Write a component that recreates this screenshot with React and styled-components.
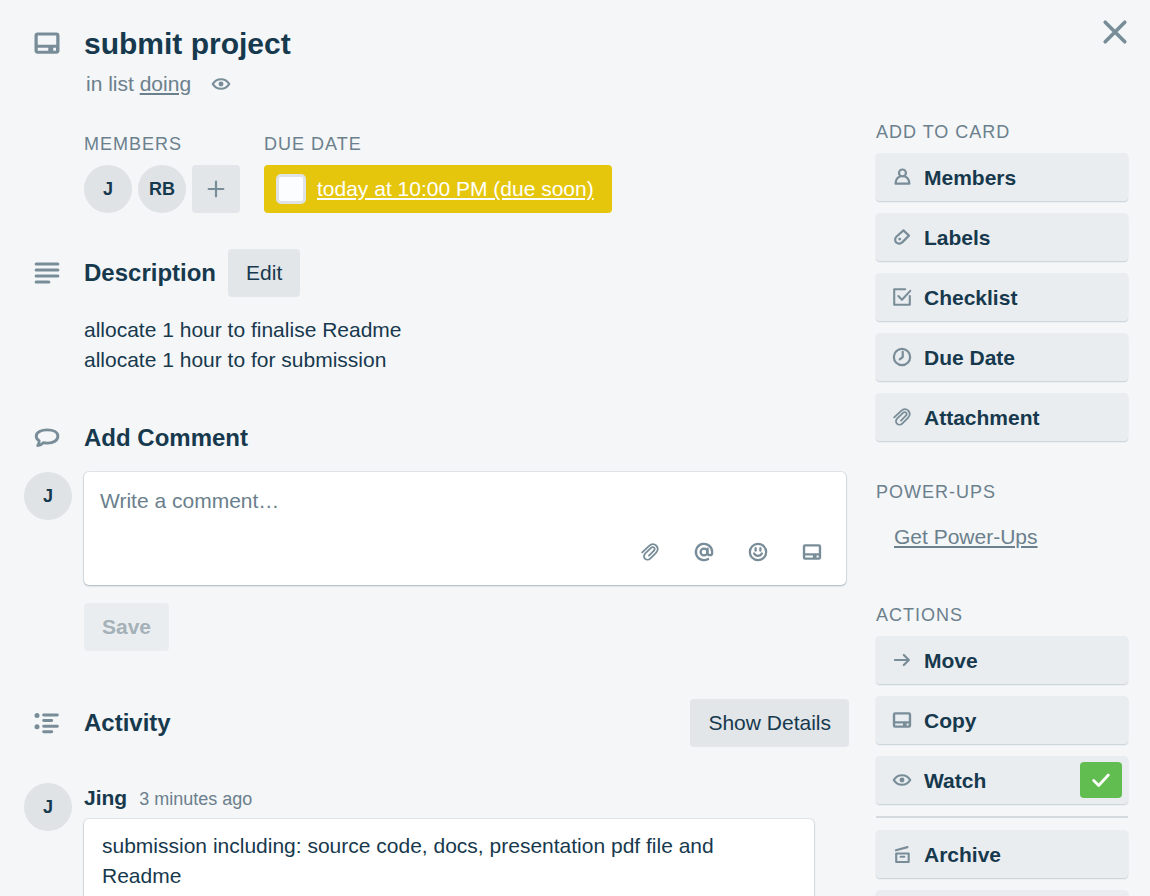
import React from "react";
import styled, { createGlobalStyle, css } from "styled-components";

const GlobalStyle = createGlobalStyle`
  *, *::before, *::after { box-sizing: border-box; }
  body {
    margin: 0;
    background: #f4f6f8;
    color: #17394d;
    font: 21px/30px "Liberation Sans", Arial, sans-serif;
  }
  h1, h2, h3, p { margin: 0; }
  button, input, textarea { font: inherit; color: inherit; margin: 0; }
`;

const Dialog = styled.main`
  height: 100vh;
  overflow: hidden;
  padding: 14px 22px 0 24px;
`;

const Header = styled.header`
  display: flex;
  align-items: flex-start;
  padding-left: 8px;
`;

const Heading = styled.div`
  flex: 1;
  padding-left: 22px;
`;

const Title = styled.h1`
  font-size: 30px;
  line-height: 60px;
  height: 55px;
`;

const ListLine = styled.p`
  display: flex;
  align-items: center;
  gap: 19px;
  padding-left: 2px;
  color: #6b808c;

  svg { color: #798d99; }
`;

const QuietLink = styled.a`
  color: #6b808c;
`;

const IconButton = styled.button`
  display: flex;
  padding: 0;
  border: 0;
  background: none;
  color: #798d99;
  cursor: pointer;
`;

const HeaderIcon = styled.span`
  display: flex;
  padding-top: 14px;
  color: #798d99;
`;

const CloseButton = styled(IconButton)`
  padding-top: 5px;
`;

const Columns = styled.div`
  display: grid;
  grid-template-columns: minmax(0, 1fr) 252px;
  gap: 27px;
  align-items: start;
  padding-top: 21px;
`;

const MainColumn = styled.div`
  padding-top: 12px;
`;

const Sidebar = styled.aside`
  display: flex;
  flex-direction: column;
`;

const Label = styled.h3`
  font-size: 18px;
  font-weight: 400;
  line-height: 24px;
  letter-spacing: 1px;
  text-transform: uppercase;
  color: #6b808c;
`;

const Details = styled.div`
  display: flex;
  gap: 24px;
  padding-left: 60px;
`;

const DetailRow = styled.div`
  display: flex;
  gap: 6px;
  margin-top: 9px;
`;

const Avatar = styled.span`
  display: flex;
  flex: none;
  align-items: center;
  justify-content: center;
  width: 48px;
  height: 48px;
  border-radius: 50%;
  background: #dfe3e6;
  font-size: 18px;
  font-weight: 700;
`;

const Button = styled.button`
  height: 48px;
  padding: 0 18px;
  border: 0;
  border-radius: 4px;
  background: #e2e6e9;
  color: #17394d;
  cursor: pointer;

  &:disabled {
    background: #eaedf0;
    color: #a5b1b8;
    font-weight: 700;
    cursor: default;
  }
`;

const AddButton = styled(Button)`
  display: flex;
  align-items: center;
  justify-content: center;
  width: 48px;
  padding: 0;
  color: #798d99;
`;

const DueBadge = styled.div`
  display: flex;
  align-items: center;
  gap: 11px;
  height: 48px;
  margin-top: 9px;
  padding: 0 18px 0 12px;
  border-radius: 4px;
  background: #e6c60d;
`;

const DueCheckbox = styled.input`
  appearance: none;
  width: 30px;
  height: 30px;
  border: 3px solid #dfe3e6;
  border-radius: 5px;
  background: #fcfdfe;
`;

const DueLink = styled.a`
  color: #fff;
`;

const SectionHead = styled.div`
  display: flex;
  align-items: center;
  height: 48px;
  padding-left: 8px;
  color: #798d99;
`;

const SectionTitle = styled.h2`
  padding-left: 22px;
  padding-right: 12px;
  font-size: 24px;
  line-height: 30px;
  color: #17394d;
  ${(p) => p.$grow && css`flex: 1;`}
`;

const DescriptionSection = styled.section`
  margin-top: 36px;
`;

const DescriptionText = styled.p`
  padding: 18px 0 0 60px;
`;

const CommentSection = styled.section`
  margin-top: 39px;
`;

const ActivitySection = styled.section`
  margin-top: 48px;
`;

const Entry = styled.div`
  display: flex;
  gap: 12px;
  margin-top: ${(p) => p.$space}px;
`;

const EntryBody = styled.div`
  flex: 1;
  min-width: 0;
`;

const Surface = styled.div`
  border-radius: 5px;
  background: #fff;
  box-shadow: 0 1px 2px rgba(9, 45, 66, 0.25), 0 0 0 1px rgba(9, 45, 66, 0.08);
`;

const CommentBox = styled(Surface)`
  height: 113px;
  margin-right: 3px;
  padding: 14px 23px 0 16px;
`;

const CommentInput = styled.textarea`
  display: block;
  width: 100%;
  height: 30px;
  padding: 0;
  border: 0;
  outline: 0;
  resize: none;
  overflow: hidden;
  background: none;

  &::placeholder {
    color: #6b808c;
    opacity: 1;
  }
`;

const CommentTools = styled.div`
  display: flex;
  justify-content: flex-end;
  gap: 32px;
  margin-top: 25px;
`;

const SaveButton = styled(Button)`
  margin-top: 18px;
`;

const Byline = styled.p`
  display: flex;
  align-items: baseline;
  gap: 12px;
`;

const Time = styled.span`
  font-size: 18px;
  color: #6b808c;
`;

const CommentCard = styled(Surface)`
  margin: 5px 35px 0 0;
  padding: 12px 18px;
`;

const SideList = styled.div`
  display: flex;
  flex-direction: column;
  gap: 12px;
  margin-top: 9px;
`;

const SideButton = styled.button`
  display: flex;
  align-items: center;
  gap: 11px;
  height: 48px;
  padding: 0 6px 0 15px;
  border: 0;
  border-radius: 4px;
  background: #eaedf0;
  box-shadow: 0 1px 0 1px rgba(9, 45, 66, 0.03), 0 1px 0 0 rgba(9, 45, 66, 0.12);
  font-weight: 700;
  text-align: left;
  cursor: pointer;

  svg { color: #798d99; }
`;

const SideText = styled.span`
  padding-top: 2px;
`;

const WatchBadge = styled.span`
  display: flex;
  align-items: center;
  justify-content: center;
  width: 42px;
  height: 36px;
  margin-left: auto;
  border-radius: 4px;
  background: #61bd4f;

  svg { color: #fff; }
`;

const Divider = styled.hr`
  width: 100%;
  height: 2px;
  margin: 0;
  border: 0;
  background: #d5dade;
`;

const SideGroup = styled.section`
  display: flex;
  flex-direction: column;
  margin-top: ${(p) => p.$space || 0}px;
`;

const PowerUpLink = styled(QuietLink)`
  align-self: flex-start;
  margin: 18px 0 0 18px;
`;

const Svg = styled.svg`
  flex: none;
  display: block;
`;

const icons = {
  card: (
    <path
      fill="currentColor"
      stroke="none"
      fillRule="evenodd"
      d="M4.500 3.500h15a2.500 2.500 0 0 1 2.500 2.500v12a2.500 2.500 0 0 1-2.500 2.500h-15a2.500 2.500 0 0 1-2.500-2.500v-12a2.500 2.500 0 0 1 2.500-2.500ZM4.600 6v7.300h14.800V6ZM4.600 15.800v2.300H13v-2.300ZM17 15.800v2.300h2.200v-2.300Z"
    />
  ),
  eye: (
    <>
      <path d="M3 12c2.2-3.500 5.300-5.200 9-5.200s6.800 1.700 9 5.200c-2.200 3.500-5.300 5.200-9 5.200S5.200 15.500 3 12Z" />
      <circle cx="12" cy="12" r="2.700" fill="currentColor" stroke="none" />
    </>
  ),
  lines: <path d="M3.300 4.800h17.400M3.300 9.600h17.400M3.300 14.400h17.400M3.300 19.200h10.200" />,
  bubble: (
    <path d="M12.200 5.500c4.800 0 8.500 1.800 8.500 5 0 3.400-3.700 5.600-8.200 5.600-1.300 0-2.400-.1-3.400-.4-1 1.300-2.500 2.200-4.500 2.400.9-1.200 1.200-2.500 1.100-4C4.300 13.300 3.400 12 3.400 10.500c0-3.200 4-5 8.800-5Z" />
  ),
  activity: (
    <>
      <path d="M9.300 5.600h11M9.300 10h6.500M9.300 14.600h11M9.300 19h6.500" />
      <circle cx="4" cy="6" r="2" fill="currentColor" stroke="none" />
      <circle cx="4" cy="15" r="2" fill="currentColor" stroke="none" />
    </>
  ),
  clip: (
    <path d="M3.500 12.500l7-6.700c3-2.900 6.300-2.700 8.400-.6 2.200 2.200 2 5.300-.4 7.700l-6 6c-1.900 1.900-4.500 1.900-6 .4s-1.400-3.900.4-5.700l6.200-6.100c1.100-1.100 2.500-1.100 3.400-.2s.8 2.300-.3 3.300l-5.300 5.300" />
  ),
  at: (
    <>
      <circle cx="12" cy="12" r="3.700" />
      <path d="M15.900 8.300v4.700a2.500 2.500 0 0 0 5 0v-1a8.900 8.900 0 1 0-4.400 7.700" />
    </>
  ),
  smile: (
    <>
      <circle cx="12" cy="12" r="8.900" />
      <path d="M9.400 7.900v2.600M14.600 7.900v2.600M7.800 13.600c1.800 3.400 6.600 3.400 8.400 0" />
    </>
  ),
  member: (
    <>
      <circle cx="12.500" cy="7.600" r="3.800" />
      <path d="M9.400 11.800c-2.700 1-4.200 3.400-4.400 7.500h15c-.2-4.100-1.700-6.500-4.400-7.500" />
    </>
  ),
  tag: (
    <>
      <path d="M13.600 4.800 19.600 10.500l-7.100 7.100c-2.200 2.200-5 2.200-6.700.5-1.800-1.800-1.700-4.700.3-6.600Z" />
      <circle cx="9.500" cy="14.300" r="1.600" fill="currentColor" stroke="none" />
    </>
  ),
  checklist: (
    <>
      <path d="M15.500 3.500h-12v17h17v-9.500" />
      <path d="m8 11 4 4 9-9.700" />
    </>
  ),
  clock: (
    <>
      <circle cx="12" cy="12" r="8.900" />
      <path d="M12.800 6.500v5.500l-3.300 2.500" />
    </>
  ),
  arrow: <path d="M4.300 12h15M14 6.500l5.500 5.500-5.500 5.500" />,
  archive: (
    <>
      <path d="M5.300 8 18 4.500" />
      <path d="M5.700 11.500h13.600v9.200H5.700ZM10.500 15h4" />
    </>
  ),
  plus: <path d="M12 4v16M4 12h16" />,
  check: <path d="m4 12.500 5.500 5.500L20 6.500" />,
  close: <path d="m3 3 18 18M21 3 3 21" />,
};

function Icon({ name, size = 22, weight = 2 }) {
  return (
    <Svg
      width={size}
      height={size}
      viewBox="0 0 24 24"
      fill="none"
      stroke="currentColor"
      strokeWidth={weight}
      strokeLinecap="round"
      strokeLinejoin="round"
      aria-hidden="true"
    >
      {icons[name]}
    </Svg>
  );
}

const cardItems = [
  ["member", "Members", 2.4],
  ["tag", "Labels", 2.4],
  ["checklist", "Checklist", 2.3],
  ["clock", "Due Date", 2.4],
  ["clip", "Attachment", 2],
];

const toolItems = [
  ["clip", "Add attachment", 2],
  ["at", "Mention a member", 2.5],
  ["smile", "Add emoji", 2.5],
  ["card", "Add card", 2],
];

export default function App() {
  return (
    <>
      <GlobalStyle />
      <Dialog>
        <Header>
          <HeaderIcon><Icon name="card" size={30} /></HeaderIcon>
          <Heading>
            <Title>submit project</Title>
            <ListLine>
              <span>in list <QuietLink href="#doing">doing</QuietLink></span>
              <Icon name="eye" weight={2.4} />
            </ListLine>
          </Heading>
          <CloseButton aria-label="Close">
            <Icon name="close" size={26} weight={3.4} />
          </CloseButton>
        </Header>
        <Columns>
          <MainColumn>
            <Details>
              <div>
                <Label>Members</Label>
                <DetailRow>
                  <Avatar>J</Avatar>
                  <Avatar>RB</Avatar>
                  <AddButton aria-label="Add member">
                    <Icon name="plus" weight={2.4} />
                  </AddButton>
                </DetailRow>
              </div>
              <div>
                <Label>Due date</Label>
                <DueBadge>
                  <DueCheckbox type="checkbox" aria-label="Due date complete" />
                  <DueLink href="#due">today at 10:00 PM (due soon)</DueLink>
                </DueBadge>
              </div>
            </Details>

            <DescriptionSection>
              <SectionHead>
                <Icon name="lines" size={30} weight={2.4} />
                <SectionTitle>Description</SectionTitle>
                <Button>Edit</Button>
              </SectionHead>
              <DescriptionText>
                allocate 1 hour to finalise Readme
                <br />
                allocate 1 hour to for submission
              </DescriptionText>
            </DescriptionSection>

            <CommentSection>
              <SectionHead>
                <Icon name="bubble" size={30} weight={2.3} />
                <SectionTitle>Add Comment</SectionTitle>
              </SectionHead>
              <Entry $space={10}>
                <Avatar>J</Avatar>
                <EntryBody>
                  <CommentBox>
                    <CommentInput aria-label="Comment" placeholder="Write a comment…" />
                    <CommentTools>
                      {toolItems.map(([icon, label, weight]) => (
                        <IconButton key={icon} aria-label={label}>
                          <Icon name={icon} weight={weight} />
                        </IconButton>
                      ))}
                    </CommentTools>
                  </CommentBox>
                  <SaveButton disabled>Save</SaveButton>
                </EntryBody>
              </Entry>
            </CommentSection>

            <ActivitySection>
              <SectionHead>
                <Icon name="activity" size={30} weight={2.3} />
                <SectionTitle $grow>Activity</SectionTitle>
                <Button>Show Details</Button>
              </SectionHead>
              <Entry $space={36}>
                <Avatar>J</Avatar>
                <EntryBody>
                  <Byline>
                    <strong>Jing</strong>
                    <Time>3 minutes ago</Time>
                  </Byline>
                  <CommentCard>
                    submission including: source code, docs, presentation pdf file and Readme
                  </CommentCard>
                </EntryBody>
              </Entry>
            </ActivitySection>
          </MainColumn>

          <Sidebar>
            <SideGroup>
              <Label>Add to card</Label>
              <SideList>
                {cardItems.map(([icon, label, weight]) => (
                  <SideButton key={label}>
                    <Icon name={icon} weight={weight} />
                    <SideText>{label}</SideText>
                  </SideButton>
                ))}
              </SideList>
            </SideGroup>
            <SideGroup $space={39}>
              <Label>Power-ups</Label>
              <PowerUpLink href="#power-ups">Get Power-Ups</PowerUpLink>
            </SideGroup>
            <SideGroup $space={51}>
              <Label>Actions</Label>
              <SideList>
                <SideButton>
                  <Icon name="arrow" weight={2.4} />
                  <SideText>Move</SideText>
                </SideButton>
                <SideButton>
                  <Icon name="card" />
                  <SideText>Copy</SideText>
                </SideButton>
                <SideButton>
                  <Icon name="eye" weight={2.4} />
                  <SideText>Watch</SideText>
                  <WatchBadge><Icon name="check" weight={3} /></WatchBadge>
                </SideButton>
                <Divider />
                <SideButton>
                  <Icon name="archive" weight={2.3} />
                  <SideText>Archive</SideText>
                </SideButton>
                <SideButton aria-label="Share" />
              </SideList>
            </SideGroup>
          </Sidebar>
        </Columns>
      </Dialog>
    </>
  );
}
